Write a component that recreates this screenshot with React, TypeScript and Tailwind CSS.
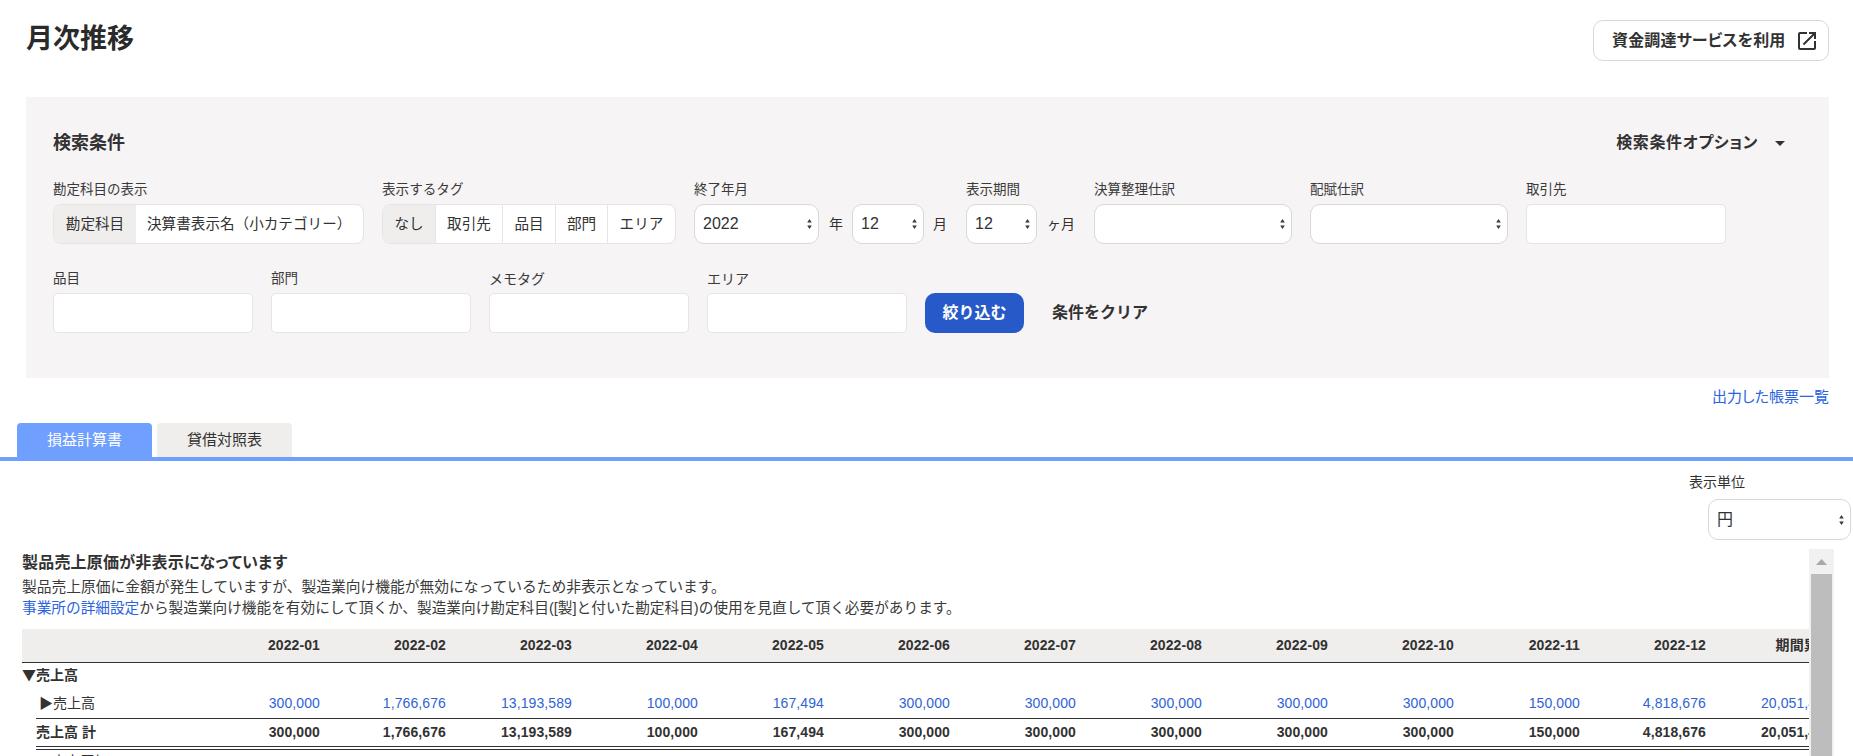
import React from "react";

const Arrows = () => (
  <svg className="absolute right-[7px] top-1/2 -translate-y-1/2 pointer-events-none" width="5" height="11" viewBox="0 0 5 11">
    <path d="M2.5 0.5 L4.8 4 H0.2 Z M2.5 10.5 L0.2 7 H4.8 Z" fill="#3a3a3a" />
  </svg>
);

const Select = ({ w, value, h = "h-[40px]" }: { w: string; value?: string; h?: string }) => (
  <div className={`relative shrink-0 ${h} ${w}`}>
    <select
      defaultValue={value ?? ""}
      className="w-full h-full appearance-none rounded-[10px] bg-white border border-[#d9d8d7] pl-[8px] text-[16px] text-[#323232] [font-family:'Liberation_Sans','Noto_Sans_CJK_JP',sans-serif]"
    >
      <option value={value ?? ""}>{value ?? ""}</option>
    </select>
    <Arrows />
  </div>
);

const Field = ({ label, cls = "text-[13.5px]", children }: { label: string; cls?: string; children: React.ReactNode }) => (
  <div className="flex flex-col shrink-0">
    <div className={`h-[20px] mb-[4px] leading-[20px] text-[#3a3a3a] whitespace-nowrap ${cls}`}>{label}</div>
    {children}
  </div>
);

const Input = () => (
  <input className="h-[40px] w-[200px] bg-white border border-[#e6e5e4] rounded-[5px]" />
);

const months = ["2022-01","2022-02","2022-03","2022-04","2022-05","2022-06","2022-07","2022-08","2022-09","2022-10","2022-11","2022-12"];
const values = ["300,000","1,766,676","13,193,589","100,000","167,494","300,000","300,000","300,000","300,000","300,000","150,000","4,818,676","20,051,435"];

const Cell = ({ children, cls = "" }: { children?: React.ReactNode; cls?: string }) => (
  <div className={`w-[126px] shrink-0 text-right whitespace-nowrap tracking-[0.1px] ${cls}`}>{children}</div>
);

export default function App() {
  return (
    <div className="w-[1853px] h-[756px] overflow-hidden bg-white text-[#323232] text-[14px] [font-family:'Liberation_Sans','Noto_Sans_CJK_JP',sans-serif]">
      {/* header */}
      <div className="h-[97px] pl-[26px] pr-[24px] pt-[20px] flex justify-between items-start">
        <h1 className="mt-[1px] text-[27px] leading-[37px] font-bold text-[#2a2a2a]">月次推移</h1>
        <button className="h-[41px] w-[236px] pl-[18px] flex items-center bg-white border border-[#d9d8d7] rounded-[10px]">
          <span className="text-[16px] font-bold whitespace-nowrap w-[183px] text-left [font-feature-settings:'palt'] tracking-[0.15px]">資金調達サービスを利用</span>
          <svg width="24" height="24" viewBox="0 0 24 24" fill="#323232">
            <path d="M19 19H5V5h7V3H5a2 2 0 0 0-2 2v14a2 2 0 0 0 2 2h14c1.1 0 2-.9 2-2v-7h-2v7zM14 3v2h3.59l-9.83 9.83 1.41 1.41L19 6.41V10h2V3h-7z" />
          </svg>
        </button>
      </div>

      {/* search panel */}
      <div className="ml-[26px] mr-[24px] h-[281px] bg-[#f6f4f5] pl-[27px] pt-[32px]">
        <div className="h-[28px] flex justify-between items-center pr-[44px]">
          <div className="text-[18px] font-bold">検索条件</div>
          <div className="flex items-center">
            <span className="text-[16px] font-bold [font-feature-settings:'palt'] tracking-[0.6px]">検索条件オプション</span>
            <svg className="ml-[17px]" width="10" height="5" viewBox="0 0 10 5"><path d="M0 0H10L5 5Z" fill="#323232" /></svg>
          </div>
        </div>

        <div className="mt-[23px] flex gap-[18px]">
          <Field label="勘定科目の表示">
            <div className="h-[40px] w-[311px] flex rounded-[8px] border border-[#e6e5e4] bg-white overflow-hidden leading-[38px] text-[14.6px]">
              <div className="w-[82px] text-center bg-[#efeeed]">勘定科目</div>
              <div className="pl-[11px] whitespace-nowrap">決算書表示名（小カテゴリー）</div>
            </div>
          </Field>
          <Field label="表示するタグ" cls="text-[13.6px]">
            <div className="h-[40px] w-[294px] flex rounded-[8px] border border-[#e6e5e4] bg-white overflow-hidden leading-[38px] text-[14.6px] divide-x divide-[#e6e5e4]">
              <div className="w-[53px] text-center bg-[#efeeed]">なし</div>
              <div className="w-[67px] text-center">取引先</div>
              <div className="w-[53px] text-center">品目</div>
              <div className="w-[52px] text-center">部門</div>
              <div className="w-[67px] text-center">エリア</div>
            </div>
          </Field>
          <Field label="終了年月">
            <div className="flex items-center">
              <Select w="w-[125px]" value="2022" />
              <span className="ml-[10px] mr-[9px]">年</span>
              <Select w="w-[72px]" value="12" />
              <span className="ml-[9px] mr-[1px]">月</span>
            </div>
          </Field>
          <Field label="表示期間">
            <div className="flex items-center">
              <Select w="w-[71px]" value="12" />
              <span className="ml-[10px] mr-[1px] w-[28px] whitespace-nowrap">ヶ月</span>
            </div>
          </Field>
          <Field label="決算整理仕訳"><Select w="w-[198px]" /></Field>
          <Field label="配賦仕訳"><Select w="w-[198px]" /></Field>
          <Field label="取引先"><Input /></Field>
        </div>

        <div className="mt-[25px] flex gap-[18px] items-end">
          <Field label="品目"><Input /></Field>
          <Field label="部門"><Input /></Field>
          <Field label="メモタグ" cls="text-[14px]"><Input /></Field>
          <Field label="エリア" cls="text-[14px]"><Input /></Field>
          <button className="h-[40px] w-[99px] rounded-[10px] bg-[#2859c9] text-white text-[16px] font-bold">絞り込む</button>
          <button className="h-[40px] ml-[10px] text-[16px] font-bold">条件をクリア</button>
        </div>
      </div>

      {/* report list link */}
      <div className="h-[45px] pr-[24px] pt-[8px] text-right">
        <a className="text-[15px] leading-[22px] text-[#2a63e0] [font-feature-settings:'palt']">出力した帳票一覧</a>
      </div>

      {/* tabs */}
      <div className="h-[38px] border-b-[4px] border-[#70a0ff] pl-[17px] flex gap-[5px]">
        <div className="w-[135px] h-[34px] rounded-t-[4px] bg-[#70a0ff] text-white text-[15px] leading-[34px] text-center">損益計算書</div>
        <div className="w-[135px] h-[34px] rounded-t-[4px] bg-[#efeeed] text-[15px] leading-[34px] text-center">貸借対照表</div>
      </div>

      {/* unit */}
      <div className="flex justify-end pr-[2px] pt-[11px]">
        <div className="w-[162px] flex flex-col">
          <div className="h-[20px] mb-[7px] leading-[20px]">表示単位</div>
          <div className="self-end"><Select w="w-[143px]" h="h-[41px]" value="円" /></div>
        </div>
      </div>

      {/* main */}
      <div className="mt-[9px] flex pl-[22px]">
        <div className="w-[1787px] overflow-hidden">
          <div className="h-[28px] leading-[28px] text-[16px] font-bold whitespace-nowrap [font-feature-settings:'palt'] tracking-[0.2px]">製品売上原価が非表示になっています</div>
          <div className="text-[14.75px] leading-[21px] whitespace-nowrap text-[#3a3a3a]">製品売上原価に金額が発生していますが、製造業向け機能が無効になっているため非表示となっています。</div>
          <div className="text-[14.67px] leading-[21px] whitespace-nowrap text-[#3a3a3a]">
            <a className="text-[#2a63e0]">事業所の詳細設定</a>から製造業向け機能を有効にして頂くか、製造業向け勘定科目([製]と付いた勘定科目)の使用を見直して頂く必要があります。
          </div>

          <div className="mt-[10px] w-[1810px]">
            <div className="h-[34px] flex items-center font-bold bg-[#efeeed] border-b border-[#323232]">
              <div className="w-[172px] shrink-0" />
              {months.map((m) => <Cell key={m}>{m}</Cell>)}
              <Cell>期間累計</Cell>
            </div>
            <div className="h-[27px] leading-[23px] font-bold"><span className="font-['Noto_Sans_CJK_JP']">▼</span>売上高</div>
            <div className="ml-[14px] h-[29px] pb-[2px] flex items-center border-b border-[#323232]">
              <div className="w-[158px] shrink-0 pl-[3px]">▶売上高</div>
              {values.map((v, i) => <Cell key={i} cls="text-[#2f63d6]">{v}</Cell>)}
            </div>
            <div className="ml-[14px] h-[31px] flex items-center font-bold border-b-[4px] border-double border-[#323232]">
              <div className="w-[158px] shrink-0">売上高 計</div>
              {values.map((v, i) => <Cell key={i}>{v}</Cell>)}
            </div>
            <div className="ml-[14px] h-[28px] pl-[16px] leading-[22px]">売上原価</div>
          </div>
        </div>
        <div className="w-[25px] h-[300px] bg-[#f1f1f1] flex flex-col">
          <div className="h-[25px] flex items-center justify-center">
            <svg width="11" height="6" viewBox="0 0 11 6"><path d="M5.5 0L11 6H0Z" fill="#a8a8a8" /></svg>
          </div>
          <div className="flex-1 mx-[2px] bg-[#bdbdbd]" />
        </div>
      </div>
    </div>
  );
}
